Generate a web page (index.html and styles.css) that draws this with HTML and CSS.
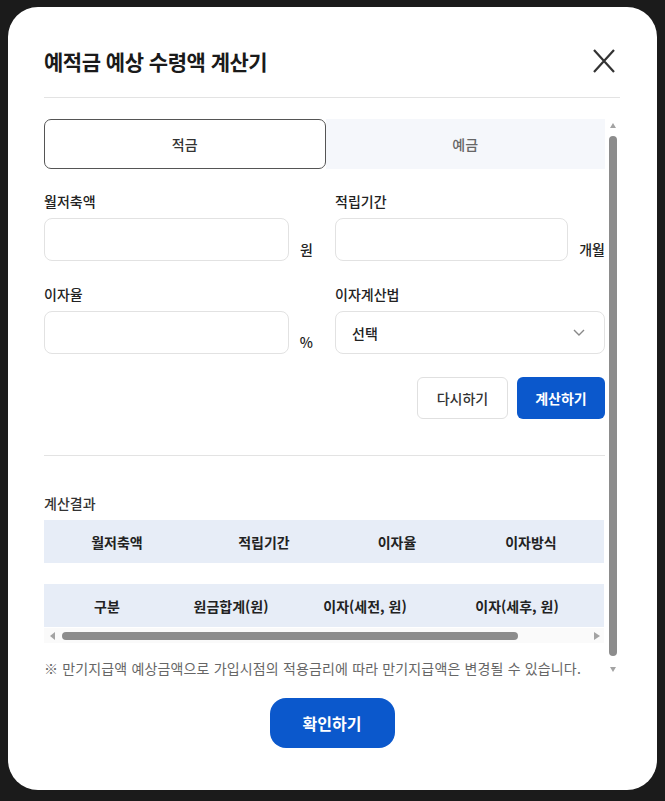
FILE: index.html
```html
<!DOCTYPE html>
<html lang="ko">
<head>
<meta charset="UTF-8">
<title>예적금 예상 수령액 계산기</title>
<link rel="stylesheet" href="styles.css">
</head>
<body>
<div class="modal">
    <div class="modal-head">
        <h1 class="modal-title">예적금 예상 수령액 계산기</h1>
        <button class="btn-close" type="button" aria-label="닫기">
            <svg width="22" height="24" viewBox="0 0 22 24"><path d="M1 1L21 23M21 1L1 23" stroke="#333" stroke-width="2.2" fill="none"/></svg>
        </button>
    </div>
    <div class="modal-line"></div>

    <div class="scroll-box">
        <div class="scroll-content">
            <!-- 적금 / 예금 탭 -->
            <div class="tabs">
                <div class="tab on">적금</div>
                <div class="tab">예금</div>
            </div>

            <div class="form-grid">
                <div class="field">
                    <label class="field-label">월저축액</label>
                    <div class="field-row">
                        <input class="inp" type="text">
                        <span class="unit">원</span>
                    </div>
                </div>
                <div class="field">
                    <label class="field-label">적립기간</label>
                    <div class="field-row">
                        <input class="inp" type="text">
                        <span class="unit">개월</span>
                    </div>
                </div>
                <div class="field">
                    <label class="field-label">이자율</label>
                    <div class="field-row">
                        <input class="inp" type="text">
                        <span class="unit">%</span>
                    </div>
                </div>
                <div class="field">
                    <label class="field-label">이자계산법</label>
                    <div class="field-row">
                        <div class="select">
                            <span>선택</span>
                            <svg width="12" height="7" viewBox="0 0 12 7"><path d="M1 1L6 6L11 1" stroke="#888" stroke-width="1.4" fill="none"/></svg>
                        </div>
                    </div>
                </div>
            </div>

            <div class="btn-row">
                <button class="btn btn-reset" type="button">다시하기</button>
                <button class="btn btn-calc" type="button">계산하기</button>
            </div>

            <div class="section-line"></div>

            <div class="result-title">계산결과</div>
            <div class="result-wrap">
                <div class="result-inner">
                    <table class="tbl">
                        <colgroup><col style="width:146px"><col style="width:148px"><col style="width:118px"><col style="width:150px"><col></colgroup>
                        <tr><th>월저축액</th><th>적립기간</th><th>이자율</th><th>이자방식</th><th></th></tr>
                    </table>
                    <table class="tbl tbl2">
                        <colgroup><col style="width:126px"><col style="width:122px"><col style="width:146px"><col style="width:158px"><col></colgroup>
                        <tr><th>구분</th><th>원금합계(원)</th><th>이자(세전, 원)</th><th>이자(세후, 원)</th><th></th></tr>
                    </table>
                </div>
            </div>
            <!-- 가로 스크롤바 -->
            <div class="hbar">
                <span class="arr arr-l"></span>
                <span class="hthumb"></span>
                <span class="arr arr-r"></span>
            </div>

            <p class="note">※ 만기지급액 예상금액으로 가입시점의 적용금리에 따라 만기지급액은 변경될 수 있습니다.</p>
        </div>
        <!-- 세로 스크롤바 -->
        <div class="vbar">
            <span class="arr arr-u"></span>
            <span class="vthumb"></span>
            <span class="arr arr-d"></span>
        </div>
    </div>

    <div class="modal-foot">
        <button class="btn-ok" type="button">확인하기</button>
    </div>
</div>
</body>
</html>
```

FILE: styles.css
```css
*{box-sizing:border-box;}
body{margin:0; background:#1b1b1b; font-family:"Noto Sans CJK KR", "Noto Sans", sans-serif; color:#222;}
button, input{font-family:inherit;}

.modal{width:649px; height:783px; margin:7px 8px; background:#fff; border-radius:30px; padding:37px 37px 0 36px; display:flex; flex-direction:column;}
.modal-head{display:flex; align-items:center; justify-content:space-between; height:34px;}
.modal-title{margin:0; font-size:21px; font-weight:700; line-height:34px; color:#1a1a1a; letter-spacing:-0.5px;}
.btn-close{width:32px; height:32px; padding:0; border:0; background:none; display:flex; align-items:center; justify-content:center;}
.modal-line{height:1px; background:#e3e3e3; margin-top:19px;}

.scroll-box{display:flex; height:559px; margin-top:21px;}
.scroll-content{width:561px; overflow:hidden;}

.tabs{display:flex; height:50px;}
.tab{flex:1; display:flex; align-items:center; justify-content:center; font-size:14px; font-weight:500; color:#666; background:#f5f7fb;}
.tab.on{background:#fff; color:#333; border:1px solid #555; border-radius:7px;}

.form-grid{display:grid; grid-template-columns:269px 270px; column-gap:22px; row-gap:23px; margin-top:22px;}
.field-label{display:block; font-size:14px; font-weight:500; line-height:20px; color:#222;}
.field-row{display:flex; align-items:flex-end; margin-top:7px;}
.inp{flex:1; min-width:0; height:43px; border:1px solid #e2e2e2; border-radius:8px; padding:0 14px; font-size:14px; outline:none;}
.unit{margin-left:11px; font-size:14px; font-weight:500; line-height:20px; padding-bottom:2px; color:#222;}
.select{flex:1; height:43px; border:1px solid #e2e2e2; border-radius:8px; padding:0 19px 0 16px; display:flex; align-items:center; justify-content:space-between; font-size:14px; font-weight:500; color:#222;}

.btn-row{display:flex; justify-content:flex-end; gap:9px; margin-top:23px;}
.btn{height:42px; border-radius:6px; font-size:14px; padding:0;}
.btn-reset{width:91px; background:#fff; border:1px solid #e0e0e0; color:#333; font-weight:500;}
.btn-calc{width:88px; background:#0b58cc; border:0; color:#fff; font-weight:700;}

.section-line{height:1px; background:#e3e3e3; margin-top:36px;}
.result-title{margin-top:37px; font-size:14px; font-weight:500; line-height:20px; color:#333;}
.result-wrap{width:560px; overflow:hidden; margin-top:7px;}
.result-inner{width:657px;}
.tbl{width:657px; border-collapse:collapse; table-layout:fixed;}
.tbl th{height:43px; padding:0; background:#e7edf7; font-size:14px; font-weight:700; color:#222; text-align:center;}
.tbl2{margin-top:21px;}

.hbar{display:flex; align-items:center; width:560px; height:15px; margin-top:1px; padding:0 4px 0 6px; background:#fafafa;}
.hthumb{width:456px; height:8px; margin-left:7px; background:#8c8c8c; border-radius:4px;}
.arr{width:0; height:0; border-style:solid; border-color:transparent;}
.arr-l{border-width:4px 5px 4px 0; border-right-color:#a3a3a3;}
.arr-r{margin-left:auto; border-width:4px 0 4px 6px; border-left-color:#a3a3a3;}

.note{margin:15px 0 0; font-size:14px; line-height:20px; color:#666; white-space:nowrap; letter-spacing:0.15px;}

.vbar{width:15px; display:flex; flex-direction:column; align-items:center; padding-top:4px;}
.vthumb{width:8px; height:520px; margin:8px 0 11px; background:#8c8c8c; border-radius:4px;}
.arr-u{border-width:0 3.5px 5px 3.5px; border-bottom-color:#a3a3a3;}
.arr-d{border-width:5px 3.5px 0 3.5px; border-top-color:#a3a3a3;}

.modal-foot{display:flex; justify-content:center; margin-top:20px;}
.btn-ok{width:125px; height:50px; border:0; border-radius:16px; background:#0b58cc; color:#fff; font-size:16px; font-weight:700;}
```
